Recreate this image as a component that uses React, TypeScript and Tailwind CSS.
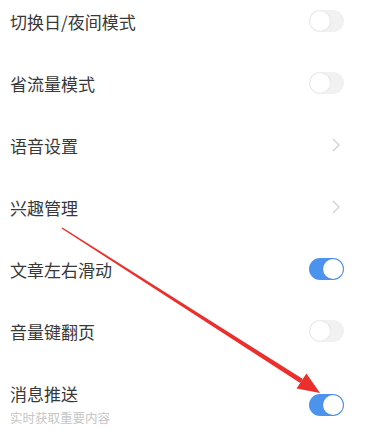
import React from "react";

function Toggle({ on }: { on: boolean }) {
  return on ? (
    <div className="relative h-[22px] w-[35px] rounded-full bg-[#4b93ec]">
      <div className="absolute right-[1px] top-[1px] h-[20px] w-[20px] rounded-full bg-white shadow-[0_0_1px_rgba(0,0,0,0.2)]" />
    </div>
  ) : (
    <div className="relative h-[22px] w-[35px] rounded-full bg-[#f1f1f1]">
      <div className="absolute left-[1px] top-[1px] h-[20px] w-[20px] rounded-full bg-white shadow-[0_0_2px_rgba(0,0,0,0.12)]" />
    </div>
  );
}

function Chevron() {
  return (
    <svg width="8" height="14" viewBox="0 0 8 14" className="mr-[4px]">
      <path d="M1 1 L7 7 L1 13" fill="none" stroke="#cfcfcf" strokeWidth="1.2" />
    </svg>
  );
}

type Item = { title: string; kind: "off" | "on" | "arrow" };

const items: Item[] = [
  { title: "切换日/夜间模式", kind: "off" },
  { title: "省流量模式", kind: "off" },
  { title: "语音设置", kind: "arrow" },
  { title: "兴趣管理", kind: "arrow" },
  { title: "文章左右滑动", kind: "on" },
  { title: "音量键翻页", kind: "off" },
];

export default function App() {
  return (
    <div
      className="relative h-[442px] w-[369px] overflow-hidden bg-white"
      style={{ fontFamily: '"Noto Sans CJK SC", "Noto Sans", sans-serif' }}
    >
      <div className="-mt-[10px] flex flex-col">
        {items.map((it) => (
          <div key={it.title} className="flex h-[62px] items-center justify-between pl-[10px] pr-[25px]">
            <span className="text-[17px] leading-none text-[#383838]">{it.title}</span>
            {it.kind === "arrow" ? <Chevron /> : <Toggle on={it.kind === "on"} />}
          </div>
        ))}
        <div className="flex h-[86px] items-center justify-between pl-[10px] pr-[25px]">
          <div className="flex flex-col">
            <span className="text-[17px] leading-none text-[#383838]">消息推送</span>
            <span className="mt-[10px] text-[12.5px] leading-none text-[#c6c6c6]">实时获取重要内容</span>
          </div>
          <Toggle on={true} />
        </div>
      </div>
      <svg className="pointer-events-none absolute left-0 top-0" width="369" height="442" viewBox="0 0 369 442">
        <polygon points="61.6,228.6 62.4,227.4 302.85,378.9 300.15,383.1" fill="#ea2f2c" />
        <polygon points="320,393 296.6,388.6 306.4,373.4" fill="#ea2f2c" />
      </svg>
    </div>
  );
}
